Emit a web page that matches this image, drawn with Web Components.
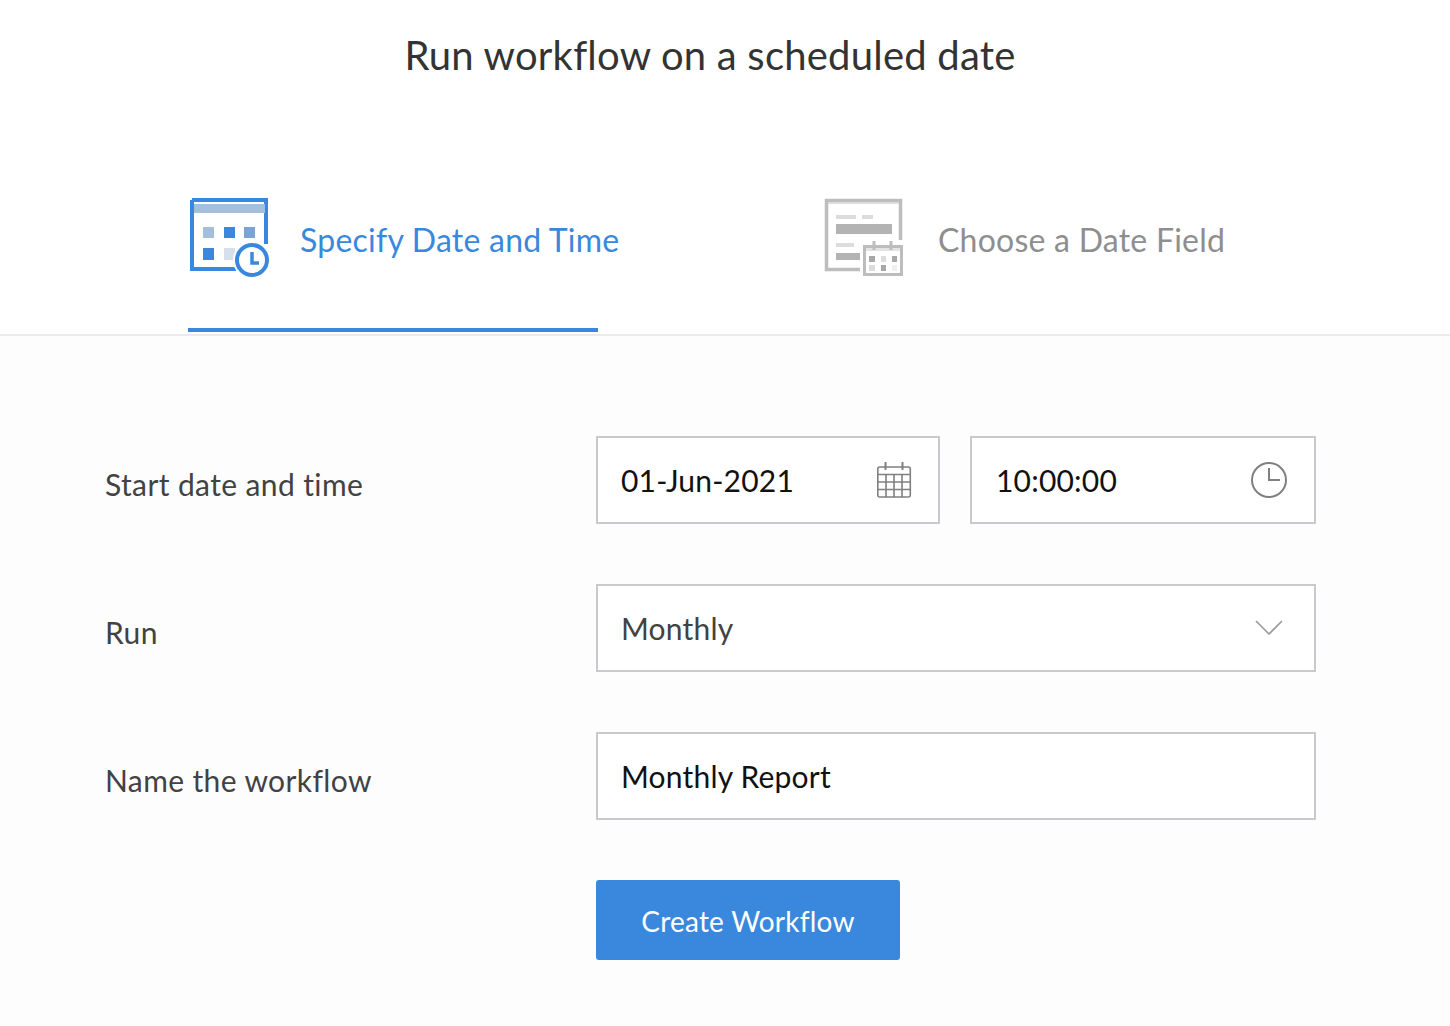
<!DOCTYPE html>
<html>
<head>
<meta charset="utf-8">
<style>
  html, body { margin: 0; padding: 0; background: #fdfdfd; }
  body { font-family: Lato, sans-serif; color: #333; }
</style>
</head>
<body>
<workflow-page>
  <tab-bar slot="tabs">
    <tab-item active label="Specify Date and Time">
      <svg slot="icon" width="78" height="78" viewBox="0 0 78 78" style="overflow: visible">
        <path d="M2 2H76V46M2 2V71H46" fill="none" stroke="#3a88dd" stroke-width="4"/>
        <rect x="4" y="6" width="71" height="9" fill="#a3bfdc"/>
        <rect x="13" y="29" width="11" height="11" fill="#a3bfdc"/>
        <rect x="34" y="29" width="11" height="11" fill="#3a88dd"/>
        <rect x="54" y="29" width="11" height="11" fill="#7aa5d3"/>
        <rect x="13" y="50" width="11" height="12" fill="#3a88dd"/>
        <rect x="34" y="50" width="11" height="12" fill="#d6e0ea"/>
        <circle cx="62" cy="62" r="19" fill="#fff"/>
        <circle cx="62" cy="62" r="15" fill="#fff" stroke="#3a88dd" stroke-width="4"/>
        <path d="M62 54V65H69" fill="none" stroke="#3a88dd" stroke-width="3.5"/>
      </svg>
    </tab-item>
    <tab-item label="Choose a Date Field">
      <svg slot="icon" width="78" height="78" viewBox="0 0 78 78" style="overflow: visible">
        <path d="M75.5 42V2.5H1.5V71.5H35" fill="none" stroke="#bdbdbd" stroke-width="3.5"/>
        <rect x="3" y="4" width="71" height="2" fill="#dcdcdc"/>
        <rect x="11" y="17" width="20" height="4" fill="#dcdcdc"/>
        <rect x="37" y="17" width="11" height="4" fill="#dcdcdc"/>
        <rect x="11" y="26" width="56" height="10" fill="#b3b3b3"/>
        <rect x="11" y="45" width="18" height="4" fill="#dcdcdc"/>
        <rect x="11" y="55" width="24" height="7" fill="#b3b3b3"/>
        <rect x="39.5" y="48.5" width="37" height="28" fill="#fff" stroke="#bdbdbd" stroke-width="3"/>
        <rect x="41" y="50" width="34" height="3" fill="#e4e4e4"/>
        <path d="M49 43V52M66 43V52" stroke="#bdbdbd" stroke-width="3"/>
        <rect x="44" y="58" width="6" height="6" fill="#a8a8a8"/>
        <rect x="56" y="58" width="5" height="6" fill="#dcdcdc"/>
        <rect x="67" y="58" width="5" height="6" fill="#a8a8a8"/>
        <rect x="44" y="67" width="6" height="6" fill="#dcdcdc"/>
        <rect x="56" y="67" width="5" height="6" fill="#a8a8a8"/>
        <rect x="67" y="67" width="5" height="6" fill="#f0f0f0"/>
      </svg>
    </tab-item>
  </tab-bar>

  <form-row label="Start date and time">
    <form-field value="01-Jun-2021" dark style="flex: 0 0 344px">
      <svg slot="icon" width="36" height="38" viewBox="0 0 36 38" fill="none" stroke="#808080" stroke-width="1.6">
        <rect x="1.8" y="6" width="32.5" height="30" rx="2"/>
        <path d="M1.8 13.5H34M1.8 21H34M1.8 28.5H34M10 13.5V36M18 13.5V36M26 13.5V36"/>
        <path d="M9.5 1V9M26.5 1V9" stroke-width="2"/>
      </svg>
    </form-field>
    <form-field value="10:00:00" dark style="padding-left: 24px">
      <svg slot="icon" style="margin-right: 1px" width="36" height="36" viewBox="0 0 36 36" fill="none" stroke="#808080" stroke-width="2">
        <circle cx="18" cy="18" r="17"/>
        <path d="M18 6V18H29"/>
      </svg>
    </form-field>
  </form-row>
  <form-row label="Run">
    <form-field value="Monthly">
      <svg slot="icon" style="margin: 0 5px 2px 0" width="28" height="16" viewBox="0 0 28 16" fill="none" stroke="#999" stroke-width="1.6">
        <path d="M1 2L14 15L27 2"/>
      </svg>
    </form-field>
  </form-row>
  <form-row label="Name the workflow">
    <form-field value="Monthly Report" dark></form-field>
  </form-row>
  <form-row>
    <action-button>Create Workflow</action-button>
  </form-row>
</workflow-page>

<script>
class WorkflowPage extends HTMLElement {
  constructor() {
    super();
    this.attachShadow({ mode: 'open' });
    this.shadowRoot.innerHTML = `
      <style>
        :host { display: block; width: 1450px; height: 1026px; overflow: hidden; font-family: Lato, sans-serif; }
        header { background: #fff; border-bottom: 2px solid #ebebeb; height: 334px; display: flex; flex-direction: column; }
        h1 { margin: 0; padding: 31px 30px 0 0; height: 47px; text-align: center; font-size: 40px; line-height: 48px; font-weight: 400; letter-spacing: 0.22px; color: #333; }
        .tabs { margin-top: 90px; flex: 1; }
        main { padding: 100px 134px 0 105px; display: flex; flex-direction: column; gap: 60px; }
      </style>
      <header>
        <h1>Run workflow on a scheduled date</h1>
        <div class="tabs"><slot name="tabs"></slot></div>
      </header>
      <main><slot></slot></main>
    `;
  }
}

class TabBar extends HTMLElement {
  constructor() {
    super();
    this.attachShadow({ mode: 'open' });
    this.shadowRoot.innerHTML = `
      <style>
        :host { display: flex; padding-left: 188px; height: 100%; gap: 225px; }
      </style>
      <slot></slot>
    `;
  }
}

class TabItem extends HTMLElement {
  constructor() {
    super();
    this.attachShadow({ mode: 'open' });
    this.shadowRoot.innerHTML = `
      <style>
        :host { display: block; width: 410px; height: 164px; box-sizing: border-box; border-bottom: 4px solid transparent; font-size: 32px; letter-spacing: 0.23px; color: #8e8e8e; }
        :host([active]) { border-bottom-color: #3a88dd; color: #3a88dd; }
        .inner { display: flex; align-items: center; gap: 35px; white-space: nowrap; height: 140px; }
        :host([active]) .inner { gap: 32px; }
        ::slotted(svg) { display: block; flex: none; }
        .icon { margin: 0 0 2px 2px; height: 78px; }
        .label { padding-top: 2px; }
      </style>
      <div class="inner">
        <div class="icon"><slot name="icon"></slot></div>
        <span class="label"></span>
      </div>
    `;
    this.shadowRoot.querySelector('.label').textContent = this.getAttribute('label');
  }
}

class FormRow extends HTMLElement {
  constructor() {
    super();
    this.attachShadow({ mode: 'open' });
    this.shadowRoot.innerHTML = `
      <style>
        :host { display: grid; grid-template-columns: 491px 720px; align-items: center; font-size: 30px; letter-spacing: 0.38px; color: #424242; }
        .label { padding-top: 7px; }
        .controls { display: flex; gap: 30px; }
      </style>
      <div class="label"></div>
      <div class="controls"><slot></slot></div>
    `;
    this.shadowRoot.querySelector('.label').textContent = this.getAttribute('label') || '';
  }
}

class FormField extends HTMLElement {
  constructor() {
    super();
    this.attachShadow({ mode: 'open' });
    this.shadowRoot.innerHTML = `
      <style>
        :host { display: flex; flex: 1; align-items: center; justify-content: space-between; box-sizing: border-box; height: 88px; padding: 0 26px 0 23px; background: #fff; border: 2px solid #c9c9ce; font-size: 30px; letter-spacing: 0.2px; color: #424242; }
        :host([dark]) { color: #111; }
        .value { white-space: nowrap; }
        ::slotted(svg) { display: block; }
      </style>
      <span class="value"></span>
      <slot name="icon"></slot>
    `;
    this.shadowRoot.querySelector('.value').textContent = this.getAttribute('value');
  }
}

class ActionButton extends HTMLElement {
  constructor() {
    super();
    this.attachShadow({ mode: 'open' });
    this.shadowRoot.innerHTML = `
      <style>
        :host { display: flex; align-items: center; justify-content: center; width: 304px; height: 80px; padding-top: 2px; box-sizing: border-box; background: #3a88dd; border-radius: 3px; color: #fff; font-size: 28px; letter-spacing: 0.22px; }
      </style>
      <slot></slot>
    `;
  }
}

customElements.define('workflow-page', WorkflowPage);
customElements.define('tab-bar', TabBar);
customElements.define('tab-item', TabItem);
customElements.define('form-row', FormRow);
customElements.define('form-field', FormField);
customElements.define('action-button', ActionButton);
</script>
</body>
</html>
